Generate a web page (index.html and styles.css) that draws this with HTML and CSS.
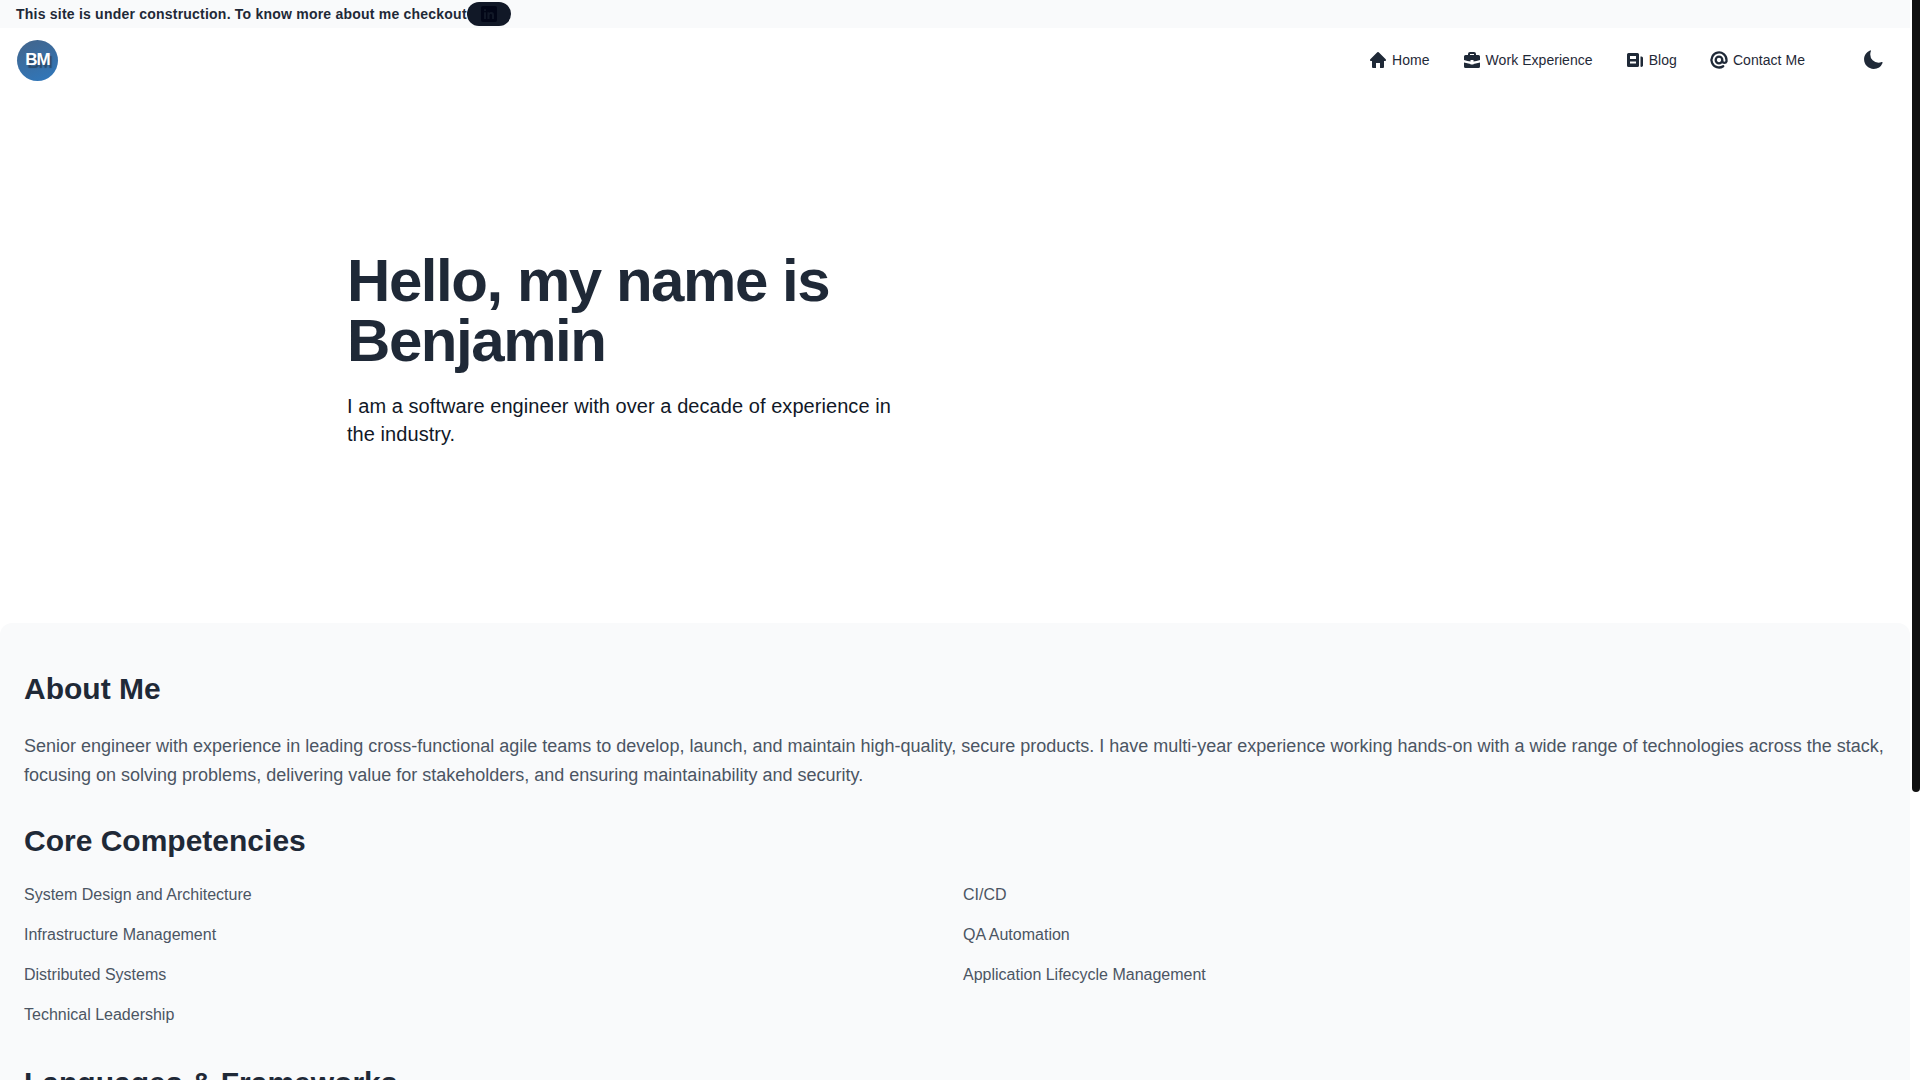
FILE: index.html
```html
<!DOCTYPE html>
<html lang="en">
<head>
    <meta charset="UTF-8">
    <meta name="viewport" content="width=device-width, initial-scale=1.0">
    <title>Benjamin</title>
    <link rel="stylesheet" href="styles.css">
</head>
<body>
    <div class="scroll-thumb"></div>
    <div class="banner">
        <span>This site is under construction. To know more about me checkout</span>
        <a class="banner-link" href="#">
            <svg viewBox="0 0 16 16" width="16" height="16"><rect width="16" height="16" rx="2" fill="#020617"/><path fill="#111827" d="M3 6.200h2V13H3zM4 3a1.100 1.100 0 1 1 0 2.300A1.100 1.100 0 0 1 4 3zM6.400 6.200h1.900v.9c.4-.6 1.100-1.100 2.100-1.100 1.900 0 2.600 1.200 2.600 3V13h-2V9.400c0-.9-.3-1.500-1.100-1.500-.9 0-1.400.6-1.400 1.600V13h-2.100z"/></svg>
        </a>
    </div>

    <nav class="navbar">
        <a class="logo" href="#"><span class="logo-text">BM</span></a>
        <div class="nav-links">
            <a class="nav-link" href="#">
                <svg viewBox="0 0 20 20" width="20" height="20"><path fill="currentColor" d="M9.300 2.300a1 1 0 0 1 1.400 0l7 7A1 1 0 0 1 17 11h-1v6a1 1 0 0 1-1 1h-3v-5H8v5H5a1 1 0 0 1-1-1v-6H3a1 1 0 0 1-.7-1.700z"/></svg>
                Home
            </a>
            <a class="nav-link" href="#">
                <svg viewBox="0 0 20 20" width="20" height="20"><path fill="currentColor" fill-rule="evenodd" d="M6 5V4a2 2 0 0 1 2-2h4a2 2 0 0 1 2 2v1h2.500A1.500 1.500 0 0 1 18 6.500V10c-2.300.9-4.900 1.300-6.500 1.400V10h-3v1.400C6.900 11.300 4.300 10.900 2 10V6.500A1.500 1.500 0 0 1 3.500 5zM8 5h4V4H8zM2 12.600c2 .7 4.300 1.100 6.500 1.300v.6h3v-.6c2.200-.2 4.500-.6 6.500-1.300v3.900a1.500 1.500 0 0 1-1.500 1.500h-13A1.500 1.500 0 0 1 2 16.500z"/></svg>
                Work Experience
            </a>
            <a class="nav-link" href="#">
                <svg viewBox="0 0 20 20" width="20" height="20"><path fill="currentColor" fill-rule="evenodd" d="M3.500 3h9A1.500 1.500 0 0 1 14 4.500v11a1.500 1.500 0 0 1-1.500 1.500h-9A1.500 1.500 0 0 1 2 15.500v-11A1.500 1.500 0 0 1 3.500 3zM5 6v3h6V6zm0 5.500v2h6v-2z"/><path fill="currentColor" d="M15.500 6.500h1A1.500 1.500 0 0 1 18 8v7.500a1.500 1.500 0 0 1-2.500 1z"/></svg>
                Blog
            </a>
            <a class="nav-link" href="#">
                <svg viewBox="0 0 20 20" width="20" height="20"><path fill="none" stroke="currentColor" stroke-width="2.300" stroke-linecap="round" d="M13.300 10a3.300 3.300 0 1 1-6.600 0 3.300 3.300 0 0 1 6.600 0zm0 0v1.300a2.200 2.200 0 0 0 4.200 0V10a7.500 7.500 0 1 0-3.300 6.200"/></svg>
                Contact Me
            </a>
        </div>
        <button class="theme-toggle" type="button">
            <svg viewBox="0 0 24 24" width="22" height="22"><path fill="currentColor" d="M9.528 1.718a.75.75 0 0 1 .162.819A8.970 8.970 0 0 0 9 6a9 9 0 0 0 9 9 8.970 8.970 0 0 0 3.463-.69.75.75 0 0 1 .981.98 10.503 10.503 0 0 1-9.694 6.460c-5.799 0-10.500-4.700-10.500-10.500 0-4.352 2.647-8.086 6.460-9.694a.75.75 0 0 1 .818.162z"/></svg>
        </button>
    </nav>

    <section class="hero">
        <div class="hero-inner">
            <h1>Hello, my name is Benjamin</h1>
            <p>I am a software engineer with over a decade of experience in the industry.</p>
        </div>
    </section>

    <main class="content">
        <h2>About Me</h2>
        <p class="about-text">Senior engineer with experience in leading cross-functional agile teams to develop, launch, and maintain high-quality, secure products. I have multi-year experience working hands-on with a wide range of technologies across the stack, focusing on solving problems, delivering value for stakeholders, and ensuring maintainability and security.</p>

        <h2>Core Competencies</h2>
        <ul class="skill-list">
            <li>System Design and Architecture</li>
            <li>CI/CD</li>
            <li>Infrastructure Management</li>
            <li>QA Automation</li>
            <li>Distributed Systems</li>
            <li>Application Lifecycle Management</li>
            <li>Technical Leadership</li>
        </ul>

        <h2>Languages &amp; Frameworks</h2>
    </main>
</body>
</html>
```

FILE: styles.css
```css
* {
    box-sizing: border-box;
}
html {
    background: #fff;
}
body {
    margin: 0 10px 0 0;
    font-family: "Liberation Sans", Arial, sans-serif;
    color: #1f2937;
    background: #fff;
}
a {
    color: inherit;
    text-decoration: none;
}
.scroll-thumb {
    position: fixed;
    top: 0;
    right: 0;
    width: 8px;
    height: 792px;
    background: #111;
    border-radius: 0 0 4px 4px;
}
.banner {
    display: flex;
    align-items: center;
    height: 28px;
    padding-left: 16px;
    background: #f9fafb;
    font-size: 14px;
    font-weight: bold;
    line-height: 20px;
    letter-spacing: 0.22px;
}
.banner-link {
    display: flex;
    align-items: center;
    justify-content: center;
    width: 44px;
    height: 24px;
    border-radius: 12px;
    background: #111827;
}
.navbar {
    display: flex;
    align-items: center;
    height: 64px;
    padding: 0 26px 0 17px;
}
.logo {
    display: flex;
    align-items: center;
    justify-content: center;
    width: 41px;
    height: 41px;
    border-radius: 50%;
    background: linear-gradient(160deg, #43648a, #2f78bd);
}
.logo-text {
    color: #fff;
    font-size: 17px;
    font-weight: bold;
    letter-spacing: -1px;
    text-shadow: 2px 3px 1px rgba(31, 41, 55, 0.55);
}
.nav-links {
    display: flex;
    align-items: center;
    gap: 32px;
    margin-left: auto;
}
.nav-link {
    display: flex;
    align-items: center;
    gap: 4px;
    font-size: 14px;
    line-height: 20px;
    letter-spacing: 0.05px;
}
.theme-toggle {
    display: flex;
    margin-left: 57px;
    padding: 0;
    border: none;
    background: none;
    color: #1f2937;
}
.hero {
    height: 531px;
    padding: 159px 0 0 347px;
}
.hero-inner {
    width: 560px;
}
.hero h1 {
    margin: 0;
    font-size: 60px;
    line-height: 60px;
    letter-spacing: -1.45px;
    color: #1f2937;
}
.hero p {
    margin: 21px 0 0;
    font-size: 20px;
    line-height: 28px;
    letter-spacing: 0.06px;
    color: #111827;
}
.content {
    height: 850px;
    padding: 48px 24px;
    background: #f9fafb;
    border-radius: 12px;
}
.content h2 {
    margin: 0 0 16px;
    font-size: 30px;
    line-height: 36px;
    color: #1f2937;
}
.about-text {
    margin: 25px 0 33px;
    font-size: 18px;
    line-height: 29px;
    color: #4b5563;
}
.skill-list {
    display: grid;
    grid-template-columns: 1fr 1fr;
    column-gap: 16px;
    margin: 0 0 30px;
    padding: 0;
    list-style: none;
    font-size: 16px;
    line-height: 24px;
    color: #4b5563;
}
.skill-list li {
    padding: 8px 0;
}
```
